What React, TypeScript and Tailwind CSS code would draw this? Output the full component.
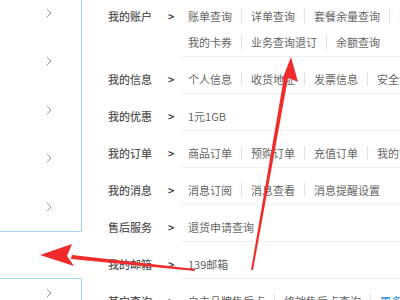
const rows: { label: string; lines: string[][]; more?: boolean }[] = [
  { label: '我的账户', lines: [['账单查询', '详单查询', '套餐余量查询', '充值记录'], ['我的卡券', '业务查询退订', '余额查询']] },
  { label: '我的信息', lines: [['个人信息', '收货地址', '发票信息', '安全设置']] },
  { label: '我的优惠', lines: [['1元1GB']] },
  { label: '我的订单', lines: [['商品订单', '预购订单', '充值订单', '我的宽带']] },
  { label: '我的消息', lines: [['消息订阅', '消息查看', '消息提醒设置']] },
  { label: '售后服务', lines: [['退货申请查询']] },
  { label: '我的邮箱', lines: [['139邮箱']] },
  { label: '其它查询', lines: [['自主品牌售后点', '终端售后点查询']], more: true },
]

function Chevron() {
  return (
    <svg width="6" height="10" viewBox="0 0 6 10" fill="none">
      <path d="M0.8 0.8 L5 5 L0.8 9.2" stroke="#9a9a9a" strokeWidth="1" />
    </svg>
  )
}

function Line({ items, more }: { items: string[]; more?: boolean }) {
  return (
    <div className="flex h-[20px] items-center whitespace-nowrap">
      {items.map((t, i) => (
        <div key={t} className="flex items-center">
          {i > 0 && <span className="h-[14px] w-px bg-[#e2e2e2]" />}
          <span className={i === 0 ? 'pl-[7px] pr-[9px]' : 'px-[9px]'}>{t}</span>
        </div>
      ))}
      {more && (
        <div className="flex items-center">
          <span className="h-[14px] w-px bg-[#e2e2e2]" />
          <span className="px-[9px] text-[#2a8be0]">更多</span>
        </div>
      )}
    </div>
  )
}

export default function App() {
  return (
    <div
      className="relative w-[400px] h-[300px] overflow-hidden bg-white flex text-[11px] text-[#666]"
      style={{ fontFamily: '"Noto Sans CJK SC", "Microsoft YaHei", sans-serif' }}
    >
      {/* left menu */}
      <div className="w-[82px] shrink-0 flex flex-col">
        <div className="-mt-[11.5px] border-r border-b border-[#a6d5f5]">
          {[0, 1, 2, 3, 4].map(i => (
            <div key={i} className="h-[48.5px] flex items-center pl-[46px]">
              <Chevron />
            </div>
          ))}
        </div>
        <div className="mt-[46px] h-[60px] border-t border-r border-[#a6d5f5] flex items-center pl-[46px] pt-[6px]">
          <Chevron />
        </div>
      </div>

      {/* right content */}
      <div className="flex-1 pl-[26px] -mt-[6px] flex flex-col min-w-0">
        {rows.map(r => (
          <div key={r.label} className="flex">
            <div className="w-[73px] shrink-0 pt-[12px] flex h-[32px] items-center">
              <span className="w-[60px] text-[#555] font-medium">{r.label}</span>
              <span className="text-[#444] font-bold">&gt;</span>
            </div>
            <div className="flex-1 min-w-0 border-b border-[#eeeeee] pt-[12px] pb-[4px] flex flex-col gap-[6px] overflow-hidden">
              {r.lines.map((l, i) => (
                <Line key={i} items={l} more={r.more} />
              ))}
            </div>
          </div>
        ))}
      </div>

      {/* red annotation arrows */}
      <svg className="absolute inset-0 pointer-events-none" width="400" height="300" viewBox="0 0 400 300">
        <polygon points="251,270 253,270 288,78 284,77" fill="#ef2b2b" />
        <polygon points="291,57 298,82 289,78 282,80" fill="#ef2b2b" />
        <polygon points="195,271 195,269 72,255 71,259" fill="#ef2b2b" />
        <polygon points="40,255 72,244 67,256 74,266" fill="#ef2b2b" />
      </svg>
    </div>
  )
}
